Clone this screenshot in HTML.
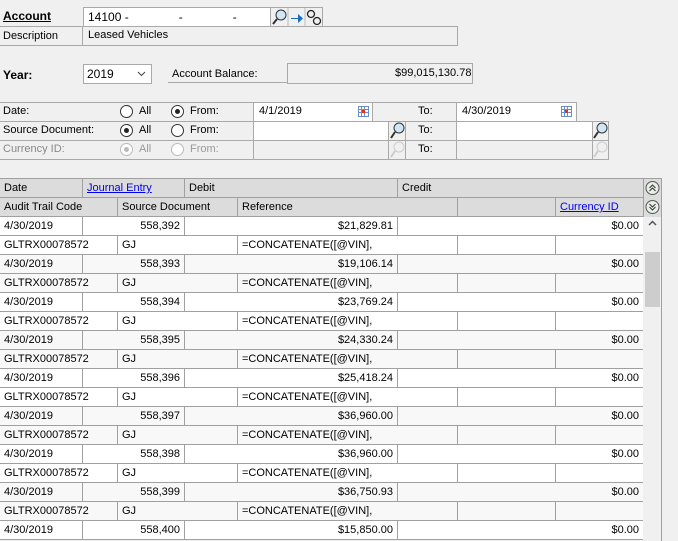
<!DOCTYPE html>
<html><head><style>
*{margin:0;padding:0;box-sizing:border-box}
body{width:678px;height:541px;overflow:hidden;background:#f0f0f0;font-family:"Liberation Sans",Arial,sans-serif;font-size:11px;color:#000;position:relative}
.a{position:absolute;white-space:nowrap}
.box{position:absolute;border:1px solid #a9a9a9;background:#fff}
.gb{position:absolute;border:1px solid #a9a9a9}
.lbl{position:absolute;line-height:18px}
.rad{position:absolute;width:13px;height:13px;border:1px solid #333;border-radius:50%;background:#fff}
.rad.on::after{content:"";position:absolute;left:3px;top:3px;width:5px;height:5px;border-radius:50%;background:#222}
.rad.dis{border-color:#bbb}
.rad.dis.on::after{background:#bbb}
.row{position:absolute;left:0;width:643px;height:19px;border-bottom:1px solid #a0a0a0}
.c{position:absolute;top:0;height:18px;line-height:18px;padding:0 4px;overflow:hidden;white-space:nowrap}
.bl{border-left:1px solid #a0a0a0}
.r{text-align:right}
.hd{background:#dcdcdc}
a{color:#0000ee;text-decoration:underline}
</style></head><body>
<div class="a" style="left:3px;top:9px;font-weight:bold;font-size:12px;text-decoration:underline">Account</div>
<div class="box" style="left:83px;top:7px;width:188px;height:20px"></div>
<div class="a" style="left:88px;top:10px;font-size:12px">14100 -&nbsp;&nbsp;&nbsp;&nbsp;&nbsp;&nbsp;&nbsp;&nbsp;&nbsp;&nbsp;&nbsp;&nbsp;&nbsp;&nbsp;&nbsp;-&nbsp;&nbsp;&nbsp;&nbsp;&nbsp;&nbsp;&nbsp;&nbsp;&nbsp;&nbsp;&nbsp;&nbsp;&nbsp;&nbsp;&nbsp;-</div>
<div class="a" style="left:270px;top:7px;width:53px;height:20px;border:1px solid #a9a9a9;border-left:none"></div>
<svg class="a" style="left:271px;top:8px" width="52" height="19">
<circle cx="10" cy="7" r="5" fill="#cfe6f7" stroke="#333"/><line x1="6" y1="11" x2="2" y2="16" stroke="#333" stroke-width="2"/>
<line x1="17" y1="0" x2="17" y2="19" stroke="#bbb"/>
<path d="M20 10h7v-4l5 4.5-5 4.5v-4h-7z" fill="#1a6cc4"/>
<line x1="34" y1="0" x2="34" y2="19" stroke="#bbb"/>
<circle cx="40" cy="6" r="3.5" fill="none" stroke="#222" stroke-width="1.3"/><circle cx="46" cy="13" r="3.5" fill="none" stroke="#222" stroke-width="1.3"/>
</svg>
<div class="a" style="left:0;top:26px;width:458px;height:20px;border:1px solid #a9a9a9;border-left:none"></div>
<div class="a" style="left:82px;top:26px;width:1px;height:20px;background:#a9a9a9"></div>
<div class="lbl" style="left:3px;top:27px">Description</div>
<div class="lbl" style="left:88px;top:26px">Leased Vehicles</div>
<div class="a" style="left:3px;top:68px;font-weight:bold;font-size:12px">Year:</div>
<div class="box" style="left:83px;top:64px;width:69px;height:20px"></div>
<div class="a" style="left:87px;top:67px;font-size:12px">2019</div>
<svg class="a" style="left:137px;top:71px" width="9" height="6"><path d="M1 1l3.5 3.5L8 1" fill="none" stroke="#444"/></svg>
<div class="a" style="left:168px;top:82px;width:120px;height:1px;background:#a9a9a9"></div>
<div class="lbl" style="left:172px;top:65px">Account Balance:</div>
<div class="a" style="left:287px;top:63px;width:186px;height:21px;border:1px solid #a9a9a9"></div>
<div class="a" style="left:395px;top:67px">$99,015,130.78</div>
<div class="a" style="left:0;top:102px;width:254px;height:58px;border:1px solid #a9a9a9;border-left:none"></div>
<div class="a" style="left:0;top:121px;width:254px;height:1px;background:#a9a9a9"></div>
<div class="a" style="left:0;top:140px;width:254px;height:1px;background:#a9a9a9"></div>
<div class="lbl" style="left:3px;top:102px">Date:</div>
<div class="lbl" style="left:3px;top:121px">Source Document:</div>
<div class="lbl" style="left:3px;top:140px;color:#888">Currency ID:</div>
<div class="rad" style="left:120px;top:105px"></div><div class="lbl" style="left:139px;top:102px">All</div>
<div class="rad on" style="left:171px;top:105px"></div><div class="lbl" style="left:190px;top:102px">From:</div>
<div class="rad on" style="left:120px;top:124px"></div><div class="lbl" style="left:139px;top:121px">All</div>
<div class="rad" style="left:171px;top:124px"></div><div class="lbl" style="left:190px;top:121px">From:</div>
<div class="rad dis on" style="left:120px;top:143px"></div><div class="lbl" style="left:139px;top:140px;color:#999">All</div>
<div class="rad dis" style="left:171px;top:143px"></div><div class="lbl" style="left:190px;top:140px;color:#999">From:</div>
<div class="box" style="left:253px;top:102px;width:120px;height:20px"></div>
<div class="lbl" style="left:259px;top:102px">4/1/2019</div>
<div class="box" style="left:253px;top:121px;width:136px;height:20px"></div>
<div class="gb" style="left:253px;top:140px;width:136px;height:20px"></div>
<div class="gb" style="left:372px;top:102px;width:85px;height:20px"></div>
<div class="gb" style="left:388px;top:121px;width:18px;height:20px"></div>
<div class="gb" style="left:388px;top:140px;width:18px;height:20px"></div>
<div class="gb" style="left:405px;top:121px;width:52px;height:20px"></div>
<div class="gb" style="left:405px;top:140px;width:52px;height:20px"></div>
<div class="lbl" style="left:418px;top:102px">To:</div>
<div class="lbl" style="left:418px;top:121px">To:</div>
<div class="lbl" style="left:418px;top:140px">To:</div>
<div class="box" style="left:456px;top:102px;width:121px;height:20px"></div>
<div class="lbl" style="left:462px;top:102px">4/30/2019</div>
<div class="box" style="left:456px;top:121px;width:137px;height:20px"></div>
<div class="gb" style="left:456px;top:140px;width:137px;height:20px"></div>
<div class="gb" style="left:592px;top:121px;width:17px;height:20px"></div>
<div class="gb" style="left:592px;top:140px;width:17px;height:20px"></div>
<svg class="a" style="left:358px;top:106px" width="11" height="11"><rect x=".5" y=".5" width="10" height="10" fill="#fff" stroke="#6a8ccc"/><path d="M.5 3.5h10M.5 6.5h10M3.5 .5v10M6.5 .5v10" stroke="#6a8ccc"/><rect x="4" y="4" width="3" height="3" fill="#e03020"/></svg>
<svg class="a" style="left:561px;top:106px" width="11" height="11"><rect x=".5" y=".5" width="10" height="10" fill="#fff" stroke="#6a8ccc"/><path d="M.5 3.5h10M.5 6.5h10M3.5 .5v10M6.5 .5v10" stroke="#6a8ccc"/><rect x="4" y="4" width="3" height="3" fill="#e03020"/></svg>
<svg class="a" style="left:389px;top:122px" width="16" height="18"><circle cx="10" cy="6" r="5" fill="#cfe6f7" stroke="#333"/><line x1="6" y1="10" x2="2" y2="16" stroke="#333" stroke-width="2"/></svg>
<svg class="a" style="left:592px;top:122px" width="16" height="18"><circle cx="10" cy="6" r="5" fill="#cfe6f7" stroke="#333"/><line x1="6" y1="10" x2="2" y2="16" stroke="#333" stroke-width="2"/></svg>
<svg class="a" style="left:389px;top:141px" width="16" height="18"><circle cx="10" cy="6" r="5" fill="none" stroke="#ccc"/><line x1="6" y1="10" x2="2" y2="16" stroke="#ccc" stroke-width="2"/></svg>
<svg class="a" style="left:592px;top:141px" width="16" height="18"><circle cx="10" cy="6" r="5" fill="none" stroke="#ccc"/><line x1="6" y1="10" x2="2" y2="16" stroke="#ccc" stroke-width="2"/></svg>
<div class="a" style="left:0;top:178px;width:662px;height:1px;background:#a0a0a0"></div>
<div class="row hd" style="top:179px">
<div class="c" style="left:0;width:82px">Date</div>
<div class="c bl" style="left:82px;width:102px"><a>Journal Entry</a></div>
<div class="c bl" style="left:184px;width:213px">Debit</div>
<div class="c bl" style="left:397px;width:246px">Credit</div></div>
<div class="row hd" style="top:198px">
<div class="c" style="left:0;width:117px">Audit Trail Code</div>
<div class="c bl" style="left:117px;width:120px">Source Document</div>
<div class="c bl" style="left:237px;width:220px">Reference</div>
<div class="c bl" style="left:457px;width:98px"></div>
<div class="c bl" style="left:555px;width:88px"><a>Currency ID</a></div></div>
<div class="a" style="left:643px;top:179px;width:19px;height:38px;background:#dcdcdc;border-left:1px solid #a0a0a0;border-right:1px solid #a0a0a0"></div>
<svg class="a" style="left:645px;top:180px" width="15" height="36"><circle cx="7.5" cy="8" r="6.5" fill="#e8efe8" stroke="#555"/><path d="M4.5 8l3-3 3 3M4.5 11l3-3 3 3" fill="none" stroke="#333"/><circle cx="7.5" cy="27" r="6.5" fill="#e8efe8" stroke="#555"/><path d="M4.5 24l3 3 3-3M4.5 27l3 3 3-3" fill="none" stroke="#333"/></svg>
<div class="a" style="left:643px;top:217px;width:19px;height:324px;background:#f0f0f0;border-right:1px solid #a0a0a0"></div>
<svg class="a" style="left:648px;top:220px" width="9" height="6"><path d="M1 5l3.5-3.5L8 5" fill="none" stroke="#555" stroke-width="1.5"/></svg>
<div class="a" style="left:645px;top:252px;width:15px;height:55px;background:#cdcdcd"></div>
<div class="row" style="top:217px;background:#fff"><div class="c" style="left:0;width:82px">4/30/2019</div><div class="c bl r" style="left:82px;width:102px">558,392</div><div class="c bl r" style="left:184px;width:213px">$21,829.81</div><div class="c bl r" style="left:397px;width:246px">$0.00</div></div>
<div class="row" style="top:236px;background:#fff"><div class="c" style="left:0;width:117px">GLTRX00078572</div><div class="c bl" style="left:117px;width:120px">GJ</div><div class="c bl" style="left:237px;width:220px">=CONCATENATE([@VIN],</div><div class="c bl" style="left:457px;width:98px"></div><div class="c bl" style="left:555px;width:88px"></div></div>
<div class="row" style="top:255px;background:#f7f8f7"><div class="c" style="left:0;width:82px">4/30/2019</div><div class="c bl r" style="left:82px;width:102px">558,393</div><div class="c bl r" style="left:184px;width:213px">$19,106.14</div><div class="c bl r" style="left:397px;width:246px">$0.00</div></div>
<div class="row" style="top:274px;background:#f7f8f7"><div class="c" style="left:0;width:117px">GLTRX00078572</div><div class="c bl" style="left:117px;width:120px">GJ</div><div class="c bl" style="left:237px;width:220px">=CONCATENATE([@VIN],</div><div class="c bl" style="left:457px;width:98px"></div><div class="c bl" style="left:555px;width:88px"></div></div>
<div class="row" style="top:293px;background:#fff"><div class="c" style="left:0;width:82px">4/30/2019</div><div class="c bl r" style="left:82px;width:102px">558,394</div><div class="c bl r" style="left:184px;width:213px">$23,769.24</div><div class="c bl r" style="left:397px;width:246px">$0.00</div></div>
<div class="row" style="top:312px;background:#fff"><div class="c" style="left:0;width:117px">GLTRX00078572</div><div class="c bl" style="left:117px;width:120px">GJ</div><div class="c bl" style="left:237px;width:220px">=CONCATENATE([@VIN],</div><div class="c bl" style="left:457px;width:98px"></div><div class="c bl" style="left:555px;width:88px"></div></div>
<div class="row" style="top:331px;background:#f7f8f7"><div class="c" style="left:0;width:82px">4/30/2019</div><div class="c bl r" style="left:82px;width:102px">558,395</div><div class="c bl r" style="left:184px;width:213px">$24,330.24</div><div class="c bl r" style="left:397px;width:246px">$0.00</div></div>
<div class="row" style="top:350px;background:#f7f8f7"><div class="c" style="left:0;width:117px">GLTRX00078572</div><div class="c bl" style="left:117px;width:120px">GJ</div><div class="c bl" style="left:237px;width:220px">=CONCATENATE([@VIN],</div><div class="c bl" style="left:457px;width:98px"></div><div class="c bl" style="left:555px;width:88px"></div></div>
<div class="row" style="top:369px;background:#fff"><div class="c" style="left:0;width:82px">4/30/2019</div><div class="c bl r" style="left:82px;width:102px">558,396</div><div class="c bl r" style="left:184px;width:213px">$25,418.24</div><div class="c bl r" style="left:397px;width:246px">$0.00</div></div>
<div class="row" style="top:388px;background:#fff"><div class="c" style="left:0;width:117px">GLTRX00078572</div><div class="c bl" style="left:117px;width:120px">GJ</div><div class="c bl" style="left:237px;width:220px">=CONCATENATE([@VIN],</div><div class="c bl" style="left:457px;width:98px"></div><div class="c bl" style="left:555px;width:88px"></div></div>
<div class="row" style="top:407px;background:#f7f8f7"><div class="c" style="left:0;width:82px">4/30/2019</div><div class="c bl r" style="left:82px;width:102px">558,397</div><div class="c bl r" style="left:184px;width:213px">$36,960.00</div><div class="c bl r" style="left:397px;width:246px">$0.00</div></div>
<div class="row" style="top:426px;background:#f7f8f7"><div class="c" style="left:0;width:117px">GLTRX00078572</div><div class="c bl" style="left:117px;width:120px">GJ</div><div class="c bl" style="left:237px;width:220px">=CONCATENATE([@VIN],</div><div class="c bl" style="left:457px;width:98px"></div><div class="c bl" style="left:555px;width:88px"></div></div>
<div class="row" style="top:445px;background:#fff"><div class="c" style="left:0;width:82px">4/30/2019</div><div class="c bl r" style="left:82px;width:102px">558,398</div><div class="c bl r" style="left:184px;width:213px">$36,960.00</div><div class="c bl r" style="left:397px;width:246px">$0.00</div></div>
<div class="row" style="top:464px;background:#fff"><div class="c" style="left:0;width:117px">GLTRX00078572</div><div class="c bl" style="left:117px;width:120px">GJ</div><div class="c bl" style="left:237px;width:220px">=CONCATENATE([@VIN],</div><div class="c bl" style="left:457px;width:98px"></div><div class="c bl" style="left:555px;width:88px"></div></div>
<div class="row" style="top:483px;background:#f7f8f7"><div class="c" style="left:0;width:82px">4/30/2019</div><div class="c bl r" style="left:82px;width:102px">558,399</div><div class="c bl r" style="left:184px;width:213px">$36,750.93</div><div class="c bl r" style="left:397px;width:246px">$0.00</div></div>
<div class="row" style="top:502px;background:#f7f8f7"><div class="c" style="left:0;width:117px">GLTRX00078572</div><div class="c bl" style="left:117px;width:120px">GJ</div><div class="c bl" style="left:237px;width:220px">=CONCATENATE([@VIN],</div><div class="c bl" style="left:457px;width:98px"></div><div class="c bl" style="left:555px;width:88px"></div></div>
<div class="row" style="top:521px;background:#fff"><div class="c" style="left:0;width:82px">4/30/2019</div><div class="c bl r" style="left:82px;width:102px">558,400</div><div class="c bl r" style="left:184px;width:213px">$15,850.00</div><div class="c bl r" style="left:397px;width:246px">$0.00</div></div>
</body></html>
